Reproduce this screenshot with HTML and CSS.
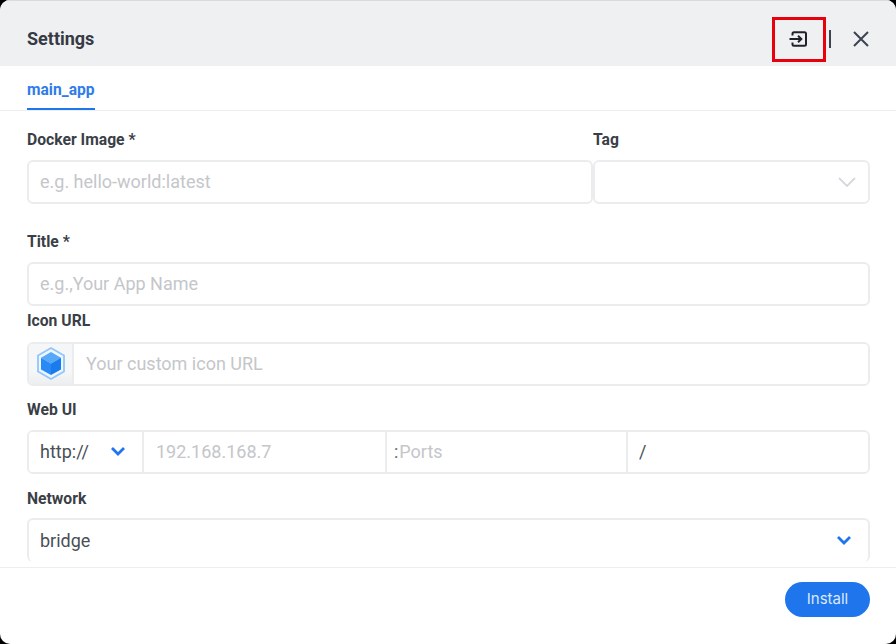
FILE: index.html
```html
<!DOCTYPE html>
<html lang="en">
<head>
<meta charset="utf-8">
<title>Settings</title>
<link rel="stylesheet" href="styles.css">
</head>
<body>
<div class="dialog">
  <header class="head">
    <h1 class="title">Settings</h1>
    <div class="actions">
      <button class="icon-btn import" aria-label="Import">
        <svg width="20" height="20" viewBox="0 0 20 20" fill="none" stroke="#1f2329" stroke-width="2"><path d="M4.500 6.500V4.800Q4.500 3.300 6 3.300H16.500Q18 3.300 18 4.800V15.200Q18 16.700 16.500 16.700H6Q4.500 16.700 4.500 15.200V13.500"/><path d="M1.500 10H13M10 6.800L13.300 10L10 13.200"/></svg>
      </button>
      <span class="sep"></span>
      <button class="icon-btn close" aria-label="Close">
        <svg width="18" height="18" viewBox="0 0 18 18" fill="none" stroke="#3d4450" stroke-width="2"><path d="M2 2L16 16M16 2L2 16"/></svg>
      </button>
    </div>
    <span class="highlight"></span>
  </header>
  <nav class="tabs"><span class="tab">main_app</span></nav>
  <main class="form">
    <div class="row-image">
      <div class="col-image">
        <label class="label">Docker Image *</label>
        <input class="input" placeholder="e.g. hello-world:latest">
      </div>
      <div class="col-tag">
        <label class="label">Tag</label>
        <div class="input select">
          <svg width="20" height="12" viewBox="0 0 20 12" fill="none" stroke="#d5d8dc" stroke-width="1.800"><path d="M2 2L10 10L18 2"/></svg>
        </div>
      </div>
    </div>
    <div class="field f-title">
      <label class="label">Title *</label>
      <input class="input" placeholder="e.g.,Your App Name">
    </div>
    <div class="field f-icon">
      <label class="label">Icon URL</label>
      <div class="group">
        <span class="icon-cell">
          <svg width="32" height="36" viewBox="0 0 32 36">
            <path d="M16 2L29 9.500V25.500L16 33L3 25.500V9.500Z" fill="#eef6ff" stroke="#93c5fb" stroke-width="1.800"/>
            <path d="M16 6L26 11.700L16 17.400L6 11.700Z" fill="#56a8f9"/>
            <path d="M6 11.700L16 17.400V29L6 23.400Z" fill="#2a8af5"/>
            <path d="M26 11.700L16 17.400V29L26 23.400Z" fill="#1a7bef"/>
          </svg>
        </span>
        <input class="cell grow wide-pad" placeholder="Your custom icon URL">
      </div>
    </div>
    <div class="field f-web">
      <label class="label">Web UI</label>
      <div class="group">
        <div class="cell proto"><span>http://</span>
          <svg class="chev" width="16" height="10" viewBox="0 0 16 10" fill="none" stroke="#1f75eb" stroke-width="2.800"><path d="M2 2L8 8L14 2"/></svg>
        </div>
        <input class="cell host" placeholder="192.168.168.7">
        <div class="cell port"><span class="colon">:</span><input class="bare" placeholder="Ports"></div>
        <input class="cell grow" value="/">
      </div>
    </div>
    <div class="field f-net">
      <label class="label">Network</label>
      <div class="input net"><span>bridge</span>
        <svg class="chev" width="16" height="10" viewBox="0 0 16 10" fill="none" stroke="#1f75eb" stroke-width="2.800"><path d="M2 2L8 8L14 2"/></svg>
      </div>
    </div>
  </main>
  <footer class="foot"><button class="install">Install</button></footer>
</div>
</body>
</html>
```
FILE: styles.css
```css
* { box-sizing: border-box; }
html, body { margin: 0; height: 100%; background: #000; }
body { font-family: Roboto, "Liberation Sans", sans-serif; color: #3a3f47; overflow: hidden; }
.dialog { width: 896px; height: 644px; background: #fff; border-radius: 10px; overflow: hidden; display: flex; flex-direction: column; }
.head { position: relative; height: 66px; flex: none; background: #eff0f2; border-top: 1px solid #d9dadc; display: flex; align-items: center; justify-content: space-between; padding: 10px 27px 0; }
.title { margin: 0; font-size: 18px; font-weight: 700; color: #353a44; }
.actions { display: flex; align-items: center; }
.icon-btn { border: 0; background: none; padding: 0; display: flex; align-items: center; justify-content: center; }
.import { width: 20px; height: 20px; margin-right: 21px; }
.sep { width: 2px; height: 18px; background: #3d4450; }
.close { width: 18px; height: 18px; margin-left: 21px; margin-right: -1px; }
.highlight { position: absolute; left: 772px; top: 16px; width: 54px; height: 45px; border: 3px solid #e8000d; }
.tabs { height: 45px; flex: none; border-bottom: 1px solid #eceef0; padding: 0 27px; display: flex; }
.tab { height: 44px; padding-top: 14px; font-size: 15.600px; font-weight: 700; color: #2f7cea; border-bottom: 2px solid #1f75eb; line-height: 20px; }
.form { flex: 1; min-height: 0; overflow: hidden; padding: 18px 26px 0 27px; }
.label { display: block; height: 22px; line-height: 22px; margin-bottom: 9px; font-size: 15.700px; font-weight: 700; color: #3a3f47; }
.input, .cell, .group { font-family: inherit; font-size: 18px; color: #4a4f57; outline: 0; background: #fff; }
.input { display: block; width: 100%; height: 44px; border: 2px solid #ebecee; border-radius: 6px; padding: 0 11px 2px; }
::placeholder { color: #c4c6ca; opacity: 1; }
.row-image { display: flex; }
.col-image { width: 566px; flex: none; }
.col-tag { flex: 1; }
.select { display: flex; align-items: center; justify-content: flex-end; padding-right: 11px; padding-bottom: 0; }
.f-title { margin-top: 27px; }
.f-icon { margin-top: 4px; }
.f-icon .label { margin-bottom: 10px; }
.f-web { margin-top: 13px; }
.f-net { margin-top: 14px; }
.f-net .label { margin-bottom: 8px; }
.group { display: flex; height: 44px; border: 2px solid #ebecee; border-radius: 6px; overflow: hidden; }
.icon-cell { width: 45px; flex: none; background: linear-gradient(#f5f6f7 70%, #eceef0); border-right: 2px solid #ebecee; display: flex; align-items: center; justify-content: center; }
.cell { border: 0; border-right: 2px solid #ebecee; height: 100%; padding: 0 11px 2px; min-width: 0; display: flex; align-items: center; }
.wide-pad { padding-left: 12px; }
.grow { flex: 1; border-right: 0; }
.proto { width: 115px; flex: none; justify-content: space-between; padding-right: 16px; }
.host { width: 243px; flex: none; padding-left: 12px; }
.port { width: 241px; flex: none; padding: 0 0 2px 7px; }
.colon { color: #6a6e75; margin-right: 1px; }
.bare { border: 0; outline: 0; padding: 0; font: inherit; width: 200px; background: none; }
.net { display: flex; align-items: center; justify-content: space-between; padding: 0 16px 2px 11px; border-bottom: 0; }
.foot { height: 77px; flex: none; border-top: 1px solid #eceef0; display: flex; justify-content: flex-end; padding: 14px 26px 0; align-items: flex-start; }
.install { width: 85px; height: 35px; border: 0; border-radius: 18px; background: #1f75eb; color: #dbe9fd; font-family: Inter, Roboto, sans-serif; font-size: 15px; padding: 0 0 2px; }
```
